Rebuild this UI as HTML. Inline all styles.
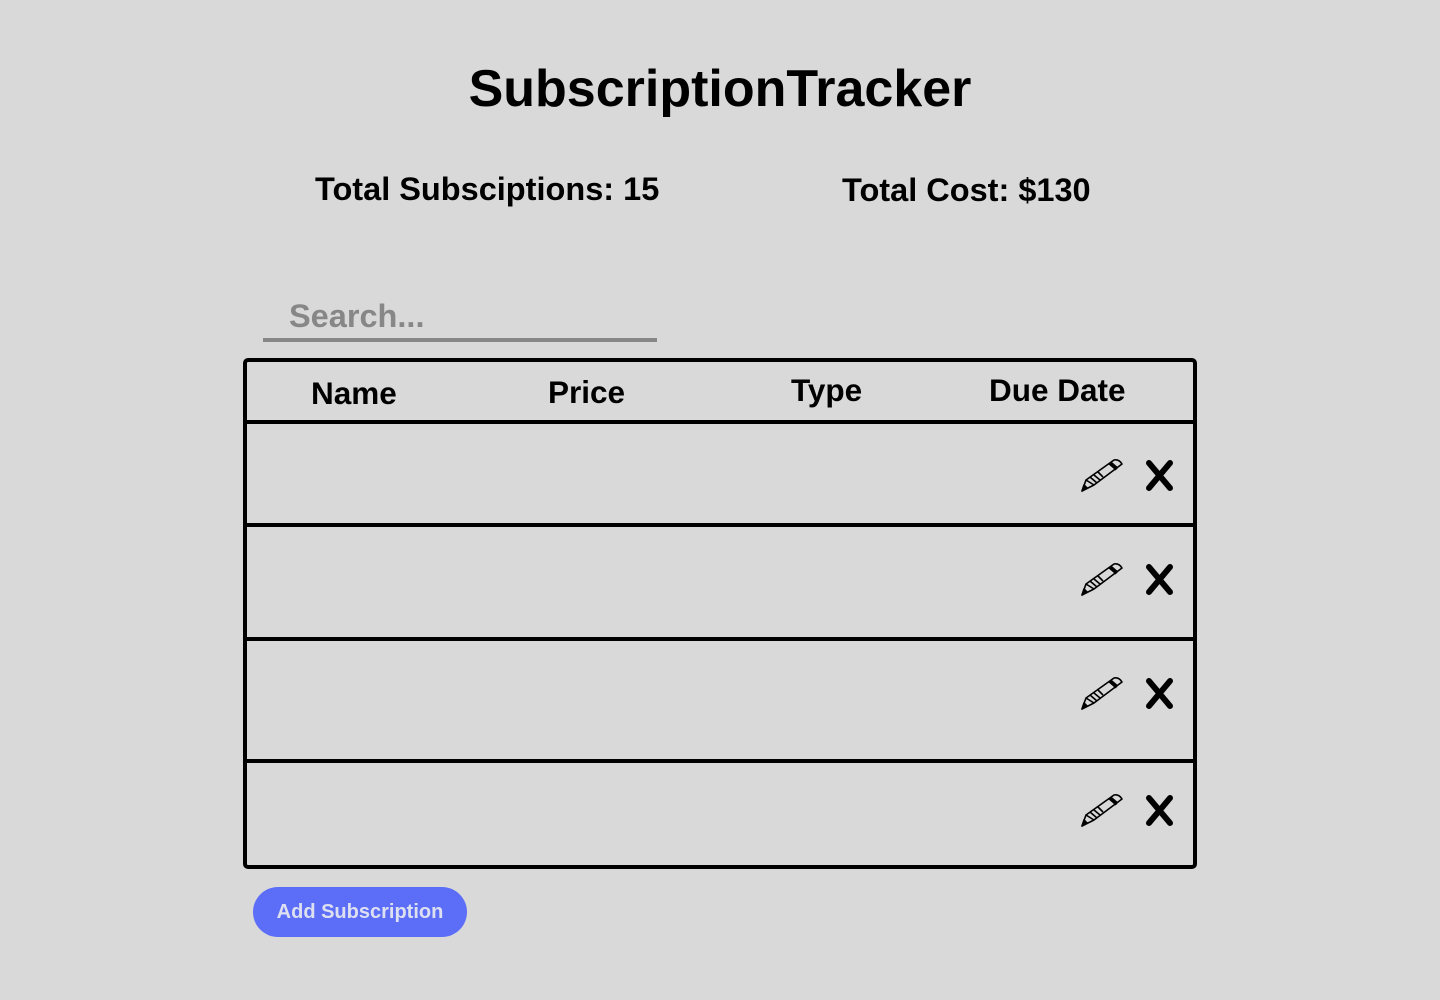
<!DOCTYPE html>
<html><head><style>
body{margin:0;width:1440px;height:1000px;background:#d9d9d9;font-family:"Liberation Sans",Arial,sans-serif;font-weight:bold;position:relative;overflow:hidden}
.a{position:absolute;white-space:nowrap}
.line{position:absolute;left:244px;width:952px;height:4px;background:#000}
</style></head><body>
<div class="a" style="left:0;width:1440px;text-align:center;top:59px;font-size:52px">SubscriptionTracker</div>
<div class="a" style="left:315px;top:171px;font-size:32.5px">Total Subsciptions: 15</div>
<div class="a" style="left:842px;top:172px;font-size:32.5px">Total Cost: $130</div>
<div class="a" style="left:289px;top:298px;font-size:32.5px;color:#878787">Search...</div>
<div class="a" style="left:263px;top:338px;width:394px;height:4px;background:#878787"></div>
<div class="a" style="left:243px;top:358px;width:946px;height:503px;border:4px solid #000;border-radius:5px"></div>
<div class="a" style="left:311px;top:375px;font-size:31.5px">Name</div>
<div class="a" style="left:548px;top:374px;font-size:31.5px">Price</div>
<div class="a" style="left:791px;top:372px;font-size:31.5px">Type</div>
<div class="a" style="left:989px;top:372px;font-size:31.5px">Due Date</div>
<div class="line" style="top:420px"></div>
<div class="line" style="top:523px"></div>
<div class="line" style="top:637px"></div>
<div class="line" style="top:759px"></div>
<svg width="0" height="0" style="position:absolute"><defs>
<g id="ic">
<g fill="none" stroke="#000" stroke-width="1.6" stroke-linejoin="round">
<path d="M2 33 L6 22 L34 2 Q39 1 42 6 L14 27 Z"/>
<path d="M6 22 L14 27 M10 19 L17 25 M14 17 L20 22 M18 14 L23 19"/>
<path d="M30 5 L37 11" stroke-width="4"/>
<path d="M2 33 L4 27 L7 30 Z" fill="#000"/>
</g>
<path d="M69 5 L90 30 M90 5 L69 30" stroke="#000" stroke-width="6" stroke-linecap="round"/>
</g></defs></svg>
<svg class="a" style="left:1080px;top:458px" width="100" height="36"><use href="#ic"/></svg>
<svg class="a" style="left:1080px;top:562px" width="100" height="36"><use href="#ic"/></svg>
<svg class="a" style="left:1080px;top:676px" width="100" height="36"><use href="#ic"/></svg>
<svg class="a" style="left:1080px;top:793px" width="100" height="36"><use href="#ic"/></svg>
<div class="a" style="left:253px;top:887px;width:214px;height:50px;border-radius:25px;background:#5c6ef8;color:#dde0f0;font-size:20px;line-height:50px;text-align:center">Add Subscription</div>
</body></html>
